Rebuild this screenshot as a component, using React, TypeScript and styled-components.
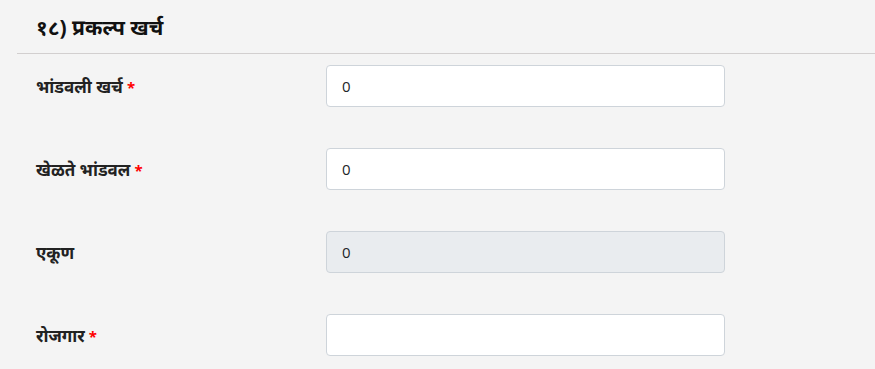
import React, { FC } from "react";
import styled, { createGlobalStyle } from "styled-components";

const GlobalStyle = createGlobalStyle`
  html, body {
    margin: 0;
    padding: 0;
    background: #f4f4f4;
  }
  body {
    font-family: "Noto Sans", "Open Sans", sans-serif;
    color: #212529;
  }
`;

const Page = styled.section`
  padding-left: 17px;
  width: 858px;
  height: 369px;
  overflow: hidden;
`;

const Header = styled.div`
  border-bottom: 1px solid #d2cfcf;
  height: 54px;
  display: flex;
  align-items: center;
  padding-left: 19px;
  box-sizing: border-box;
`;

const Title = styled.h4`
  margin: 0;
  font-size: 21px;
  font-weight: 700;
  color: #111;
`;

const Fields = styled.div`
  display: flex;
  flex-direction: column;
  gap: 41px;
  padding: 11px 0 0 19px;
`;

const Row = styled.div`
  display: grid;
  grid-template-columns: 290px 399px;
  align-items: center;
`;

const Label = styled.label`
  font-size: 17px;
  font-weight: 700;
  color: #222;
`;

const Required = styled.span`
  color: #ff0000;
  margin-left: 4px;
  font-size: 15px;
`;

const Input = styled.input<{ $readOnly?: boolean }>`
  box-sizing: border-box;
  height: 42px;
  width: 399px;
  padding: 0 15px;
  border: 1px solid #ced4da;
  border-radius: 4px;
  background: ${(p) => (p.$readOnly ? "#e9ecef" : "#fff")};
  font-family: "Open Sans", sans-serif;
  font-size: 15px;
  color: #212529;
  outline: none;
`;

const fields = [
  { label: "भांडवली खर्च", required: true, value: "0" },
  { label: "खेळते भांडवल", required: true, value: "0" },
  { label: "एकूण", required: false, value: "0", readOnly: true },
  { label: "रोजगार", required: true, value: "" },
];

const App: FC = () => (
  <>
    <GlobalStyle />
    <Page>
      <Header>
        <Title>१८) प्रकल्प खर्च</Title>
      </Header>
      <Fields>
        {fields.map((f) => (
          <Row key={f.label}>
            <Label>
              {f.label}
              {f.required && <Required>*</Required>}
            </Label>
            <Input
              defaultValue={f.value}
              readOnly={f.readOnly}
              $readOnly={f.readOnly}
            />
          </Row>
        ))}
      </Fields>
    </Page>
  </>
);

export default App;
